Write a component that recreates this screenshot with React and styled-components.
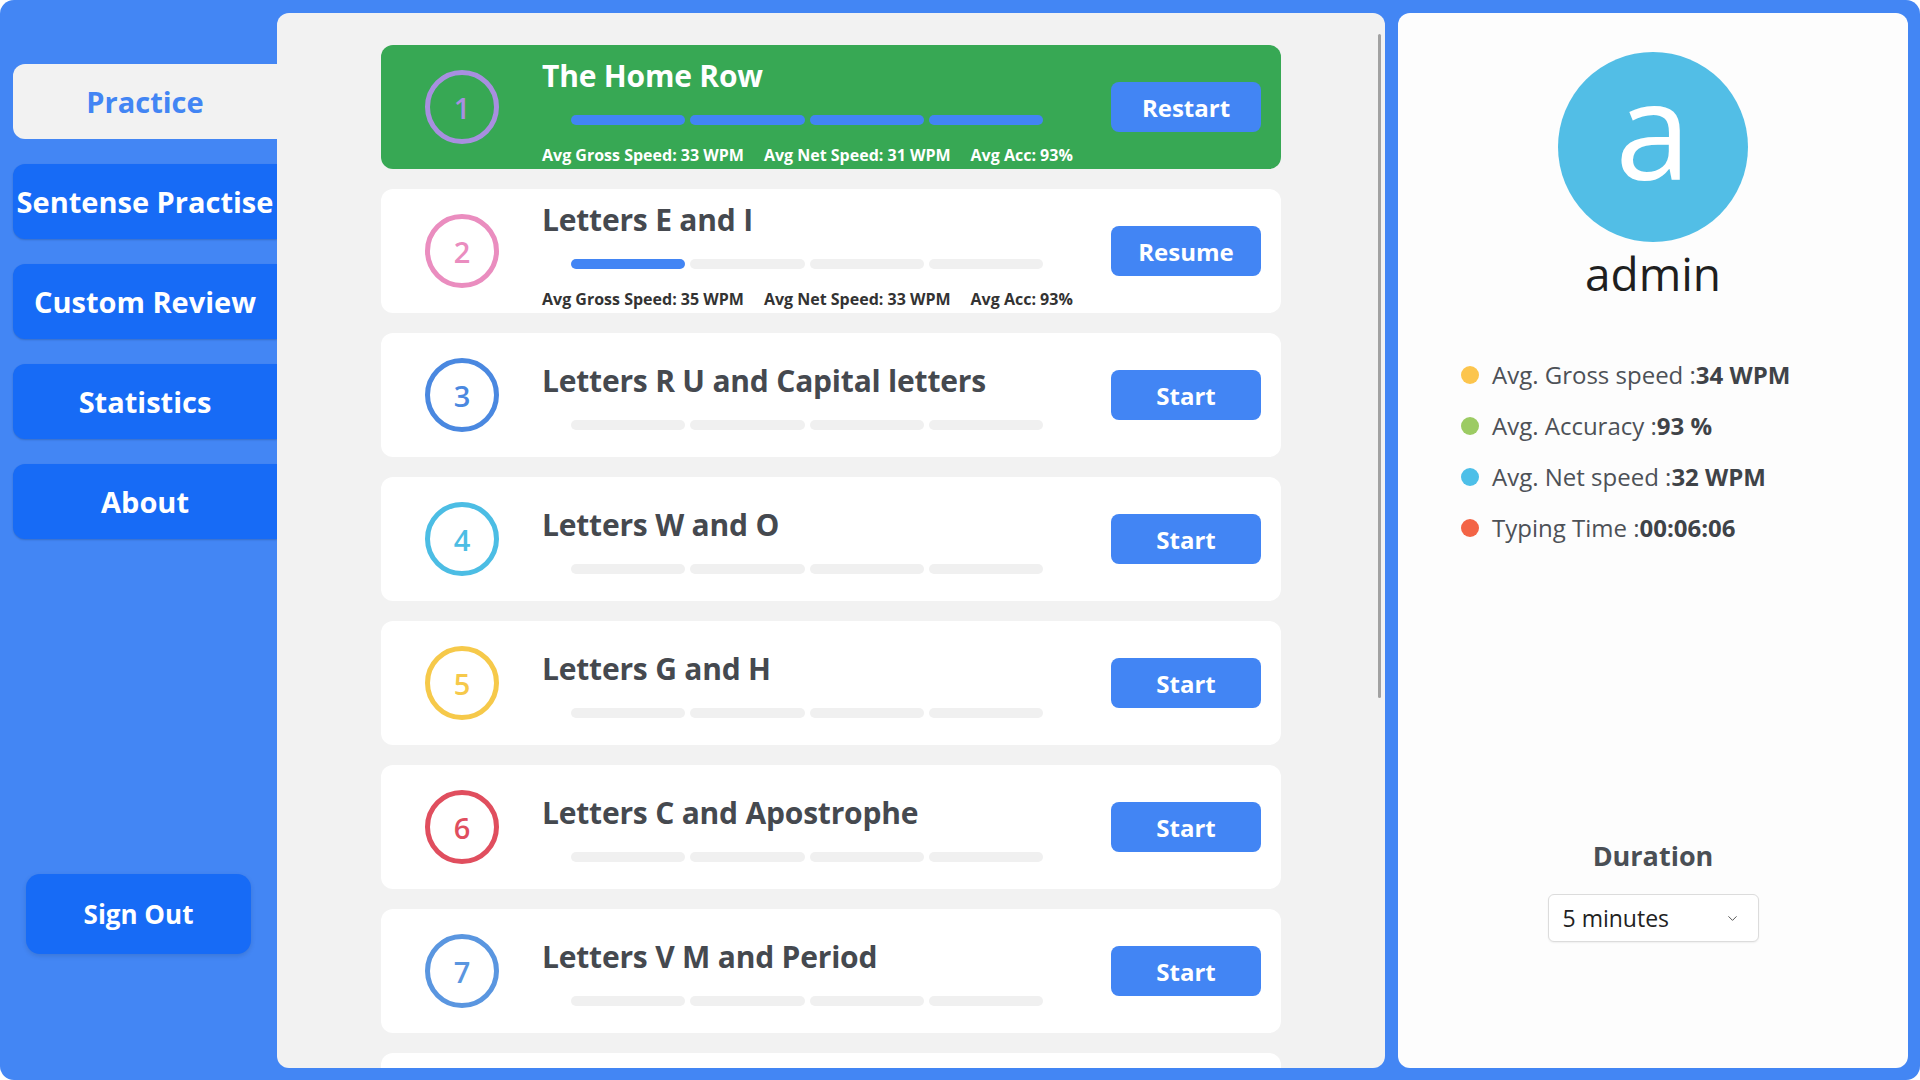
import styled, { createGlobalStyle } from 'styled-components';
import { ChevronDown } from 'lucide-react';

const GlobalStyle = createGlobalStyle`
  html, body {
    margin: 0;
    padding: 0;
    background: #ffffff;
  }
  * {
    box-sizing: border-box;
  }
`;

const lessons = [
  { id: 1, title: 'The Home Row', color: '#a88fe0', done: 4, action: 'Restart', active: true, stats: ['33 WPM', '31 WPM', '93%'] },
  { id: 2, title: 'Letters E and I', color: '#ea8dbf', done: 1, action: 'Resume', stats: ['35 WPM', '33 WPM', '93%'] },
  { id: 3, title: 'Letters R U and Capital letters', color: '#4a88e0', done: 0, action: 'Start' },
  { id: 4, title: 'Letters W and O', color: '#4cbde4', done: 0, action: 'Start' },
  { id: 5, title: 'Letters G and H', color: '#f6c94a', done: 0, action: 'Start' },
  { id: 6, title: 'Letters C and Apostrophe', color: '#e04e5e', done: 0, action: 'Start' },
  { id: 7, title: 'Letters V M and Period', color: '#5a96e0', done: 0, action: 'Start' },
  { id: 8, title: '', color: '#a88fe0', done: 0, action: '' },
];

const overview = [
  { label: 'Avg. Gross speed :', value: '34 WPM', color: '#fcc54d' },
  { label: 'Avg. Accuracy :', value: '93 %', color: '#9ccb63' },
  { label: 'Avg. Net speed :', value: '32 WPM', color: '#4dbfe8' },
  { label: 'Typing Time :', value: '00:06:06', color: '#f36446' },
];

const navItems = ['Practice', 'Sentense Practise', 'Custom Review', 'Statistics', 'About'];

export default function App() {
  return (
    <>
      <GlobalStyle />
      <Page>
        <Sidebar>
          <Nav>
            {navItems.map((item, i) => (
              <NavButton key={item} $active={i === 0}>{item}</NavButton>
            ))}
          </Nav>
          <SignOut>Sign Out</SignOut>
        </Sidebar>

        <Main>
          <LessonList>
            {lessons.map((l) => (
              <Card key={l.id} $active={l.active}>
                {l.title && (
                  <>
                    <Badge $color={l.color}>{l.id}</Badge>
                    <CardBody $hasStats={!!l.stats}>
                      <CardTitle $active={l.active}>{l.title}</CardTitle>
                      <Progress>
                        {[0, 1, 2, 3].map((s) => (
                          <Segment key={s} $filled={s < l.done} />
                        ))}
                      </Progress>
                      {l.stats && (
                        <StatLine $active={l.active}>
                          <span>Avg Gross Speed: {l.stats[0]}</span>
                          <span>Avg Net Speed: {l.stats[1]}</span>
                          <span>Avg Acc: {l.stats[2]}</span>
                        </StatLine>
                      )}
                    </CardBody>
                    <ActionButton>{l.action}</ActionButton>
                  </>
                )}
              </Card>
            ))}
          </LessonList>
          <ScrollTrack>
            <ScrollThumb />
          </ScrollTrack>
        </Main>

        <Profile>
          <Avatar>a</Avatar>
          <UserName>admin</UserName>
          <Overview>
            {overview.map((o) => (
              <OverviewRow key={o.label}>
                <Dot $color={o.color} />
                <span>{o.label}<strong>{o.value}</strong></span>
              </OverviewRow>
            ))}
          </Overview>
          <DurationBox>
            <DurationLabel>Duration</DurationLabel>
            <Select>
              <span>5 minutes</span>
              <ChevronDown size={15} strokeWidth={1.6} color="#555" />
            </Select>
          </DurationBox>
        </Profile>
      </Page>
    </>
  );
}

const Page = styled.div`
  width: 1920px;
  height: 1080px;
  background: #4386f4;
  border-radius: 14px;
  display: flex;
  padding: 13px 12px 12px 0;
  font-family: 'Open Sans', 'Noto Sans', sans-serif;
  overflow: hidden;
`;

const Sidebar = styled.aside`
  width: 277px;
  flex-shrink: 0;
  display: flex;
  flex-direction: column;
  padding: 51px 0 114px 13px;
`;

const Nav = styled.nav`
  display: flex;
  flex-direction: column;
  gap: 25px;
`;

const NavButton = styled.button`
  height: 75px;
  width: 264px;
  border: none;
  border-radius: 12px 0 0 12px;
  background: ${(p) => (p.$active ? '#f2f2f2' : '#176bf6')};
  color: ${(p) => (p.$active ? '#4285f4' : '#ffffff')};
  font-family: inherit;
  font-size: 29px;
  font-weight: 700;
  white-space: nowrap;
  box-shadow: ${(p) => (p.$active ? 'none' : '0 1px 2px rgba(0, 0, 0, 0.18)')};
  cursor: pointer;
  padding: 0;
`;

const SignOut = styled.button`
  margin-top: auto;
  margin-left: 13px;
  width: 225px;
  height: 80px;
  border: none;
  border-radius: 14px;
  background: #176bf6;
  color: #ffffff;
  font-family: inherit;
  font-size: 26px;
  font-weight: 700;
  box-shadow: 0 2px 5px rgba(0, 0, 0, 0.12);
  cursor: pointer;
`;

const Main = styled.main`
  flex: 1;
  background: #f2f2f2;
  border-radius: 12px;
  overflow: hidden;
  display: flex;
`;

const LessonList = styled.div`
  flex: 1;
  overflow-y: auto;
  scrollbar-width: none;
  padding: 32px 0 32px 104px;
  display: flex;
  flex-direction: column;
  gap: 20px;
`;

const ScrollTrack = styled.div`
  width: 12px;
  flex-shrink: 0;
  padding: 21px 0;
  display: flex;
  justify-content: center;
`;

const ScrollThumb = styled.div`
  width: 3px;
  height: 664px;
  border-radius: 2px;
  background: #a2a2a2;
`;

const Card = styled.div`
  width: 900px;
  height: 124px;
  flex-shrink: 0;
  display: flex;
  align-items: center;
  padding: 0 20px 0 44px;
  border-radius: 12px;
  background: ${(p) => (p.$active ? '#37a854' : '#ffffff')};
`;

const Badge = styled.div`
  width: 74px;
  height: 74px;
  flex-shrink: 0;
  border-radius: 50%;
  border: 5px solid ${(p) => p.$color};
  color: ${(p) => p.$color};
  display: flex;
  align-items: center;
  justify-content: center;
  font-size: 29px;
  font-weight: 600;
`;

const CardBody = styled.div`
  flex: 1;
  margin-left: 43px;
  padding-top: ${(p) => (p.$hasStats ? '6px' : '0')};
  display: flex;
  flex-direction: column;
  justify-content: center;
`;

const CardTitle = styled.div`
  font-size: 30px;
  line-height: 40px;
  font-weight: 700;
  letter-spacing: -0.2px;
  color: ${(p) => (p.$active ? '#ffffff' : '#45494f')};
  white-space: nowrap;
`;

const Progress = styled.div`
  margin: 19px 0 0 29px;
  width: 472px;
  height: 10px;
  display: grid;
  grid-template-columns: repeat(4, 1fr);
  gap: 5px;
`;

const Segment = styled.div`
  border-radius: 5px;
  background: ${(p) => (p.$filled ? '#4285f4' : '#f0f0f0')};
`;

const StatLine = styled.div`
  margin-top: 20px;
  display: flex;
  gap: 20px;
  font-size: 16px;
  line-height: 20px;
  font-weight: 700;
  color: ${(p) => (p.$active ? '#ffffff' : '#333333')};
  white-space: nowrap;
`;

const ActionButton = styled.button`
  width: 150px;
  height: 50px;
  flex-shrink: 0;
  border: none;
  border-radius: 8px;
  background: #4285f4;
  color: #ffffff;
  font-family: inherit;
  font-size: 24px;
  font-weight: 700;
  cursor: pointer;
`;

const Profile = styled.section`
  width: 510px;
  flex-shrink: 0;
  margin-left: 13px;
  background: #fdfdfd;
  border-radius: 12px;
  display: flex;
  flex-direction: column;
  align-items: center;
  padding: 39px 0 126px;
`;

const Avatar = styled.div`
  width: 190px;
  height: 190px;
  border-radius: 50%;
  background: #52bee6;
  color: #ffffff;
  display: flex;
  align-items: center;
  justify-content: center;
  font-size: 136px;
  line-height: 1;
  padding-bottom: 38px;
`;

const UserName = styled.div`
  margin-top: 4px;
  font-size: 46px;
  line-height: 55px;
  color: #1f1f1f;
`;

const Overview = styled.ul`
  list-style: none;
  margin: 48px 0 0;
  padding: 0 0 0 63px;
  align-self: stretch;
`;

const OverviewRow = styled.li`
  height: 51px;
  display: flex;
  align-items: center;
  gap: 13px;
  font-size: 24px;
  color: #4d5157;
  white-space: nowrap;

  strong {
    font-weight: 700;
    color: #3f4348;
  }
`;

const Dot = styled.span`
  width: 18px;
  height: 18px;
  border-radius: 50%;
  background: ${(p) => p.$color};
  flex-shrink: 0;
`;

const DurationBox = styled.div`
  margin-top: auto;
  display: flex;
  flex-direction: column;
  align-items: center;
`;

const DurationLabel = styled.div`
  font-size: 27px;
  line-height: 36px;
  font-weight: 700;
  color: #4a4f55;
`;

const Select = styled.div`
  margin-top: 20px;
  width: 211px;
  height: 48px;
  border: 1px solid #dcdcdc;
  border-radius: 6px;
  background: #ffffff;
  box-shadow: 0 1px 2px rgba(0, 0, 0, 0.06);
  display: flex;
  align-items: center;
  justify-content: space-between;
  padding: 0 18px 0 14px;
  font-size: 23px;
  color: #222222;
`;
